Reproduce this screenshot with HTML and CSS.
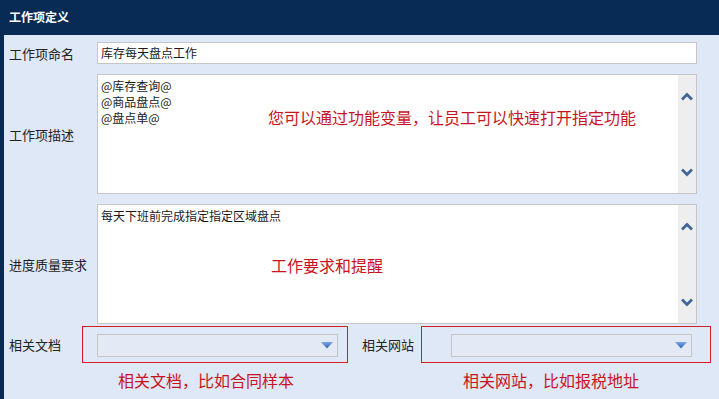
FILE: index.html
```html
<!DOCTYPE html>
<html lang="zh-CN">
<head>
  <meta charset="UTF-8" />
  <title>工作项定义</title>
  <link rel="stylesheet" href="styles.css">
</head>
<body>
  <div class="title-bar">工作项定义</div>
  <div class="panel">
    <div class="form">
      <label class="label">工作项命名</label>
      <div class="input">库存每天盘点工作</div>

      <label class="label">工作项描述</label>
      <div class="textarea">
        <div class="text">@库存查询@<br>@商品盘点@<br>@盘点单@</div>
        <div class="scroll">
          <svg width="12" height="9" viewBox="0 0 12 9"><polyline points="1,7.5 6,2.5 11,7.5" fill="none" stroke="#3f6898" stroke-width="2.8"/></svg>
          <svg width="12" height="9" viewBox="0 0 12 9"><polyline points="1,1.5 6,6.5 11,1.5" fill="none" stroke="#3f6898" stroke-width="2.8"/></svg>
        </div>
        <span class="tip tip-desc">您可以通过功能变量，让员工可以快速打开指定功能</span>
      </div>

      <label class="label">进度质量要求</label>
      <div class="textarea">
        <div class="text">每天下班前完成指定指定区域盘点</div>
        <div class="scroll">
          <svg width="12" height="9" viewBox="0 0 12 9"><polyline points="1,7.5 6,2.5 11,7.5" fill="none" stroke="#3f6898" stroke-width="2.8"/></svg>
          <svg width="12" height="9" viewBox="0 0 12 9"><polyline points="1,1.5 6,6.5 11,1.5" fill="none" stroke="#3f6898" stroke-width="2.8"/></svg>
        </div>
        <span class="tip tip-req">工作要求和提醒</span>
      </div>
    </div>

    <div class="links">
      <label class="label doc-label">相关文档</label>
      <div class="mark doc-mark">
        <div class="select">
          <svg width="12" height="7" viewBox="0 0 12 7"><defs><linearGradient id="g1" x1="0" y1="0" x2="0" y2="1"><stop offset="0" stop-color="#7aa6e6"/><stop offset="1" stop-color="#2f5fb0"/></linearGradient></defs><polygon points="0,0 12,0 6,6.5" fill="url(#g1)"/></svg>
        </div>
      </div>
      <label class="label site-label">相关网站</label>
      <div class="mark site-mark">
        <div class="select">
          <svg width="12" height="7" viewBox="0 0 12 7"><defs><linearGradient id="g2" x1="0" y1="0" x2="0" y2="1"><stop offset="0" stop-color="#7aa6e6"/><stop offset="1" stop-color="#2f5fb0"/></linearGradient></defs><polygon points="0,0 12,0 6,6.5" fill="url(#g2)"/></svg>
        </div>
      </div>
    </div>

    <div class="notes">
      <span class="note">相关文档，比如合同样本</span>
      <span class="note">相关网站，比如报税地址</span>
    </div>
  </div>
</body>
</html>
```

FILE: styles.css
```css
body {
  margin: 0;
  background: #dfe8f6;
  font-family: "Noto Sans CJK SC", "Noto Sans", sans-serif;
  color: #1a1a1a;
}
.title-bar {
  height: 35px;
  line-height: 34px;
  padding-left: 9px;
  background: #072b55;
  color: #fff;
  font-size: 12px;
  font-weight: bold;
}
.panel {
  border-left: 4px solid #072b55;
  height: 364px;
  box-sizing: border-box;
  padding: 7px 22px 0 5px;
}
.form {
  display: grid;
  grid-template-columns: 88px 1fr;
  row-gap: 10px;
  align-items: center;
}
.label {
  font-size: 13px;
  color: #222;
  white-space: nowrap;
}
.input {
  height: 22px;
  box-sizing: border-box;
  border: 1px solid #c6c6c6;
  background: #fff;
  font-size: 12px;
  line-height: 20px;
  padding-left: 3px;
}
.textarea {
  position: relative;
  display: flex;
  height: 120px;
  box-sizing: border-box;
  border: 1px solid #c6c6c6;
  background: #fff;
}
.text {
  flex: 1;
  font-size: 12px;
  line-height: 16px;
  padding: 3px 3px;
}
.scroll {
  width: 18px;
  background: #eeeeee;
  display: flex;
  flex-direction: column;
  justify-content: space-between;
  align-items: center;
  padding: 17px 0 16px;
}
.scroll svg {
  display: block;
}
.tip {
  position: absolute;
  font-size: 16px;
  line-height: 22px;
  color: #c8141c;
  white-space: nowrap;
}
.tip-desc {
  left: 170px;
  top: 31px;
}
.tip-req {
  left: 173px;
  top: 49px;
}
.links {
  display: flex;
  align-items: center;
  margin-top: 2px;
}
.links > * {
  flex-shrink: 0;
}
.doc-label {
  width: 73px;
}
.site-label {
  width: 59px;
  margin-left: 14px;
}
.mark {
  border: 1px solid #d42020;
  padding: 7px 0 5px;
  box-sizing: border-box;
}
.doc-mark {
  width: 266px;
  padding-left: 14px;
}
.site-mark {
  width: 290px;
  padding-left: 29px;
}
.select {
  width: 241px;
  height: 23px;
  box-sizing: border-box;
  border: 1px solid #c6c6c6;
  background: #e3eaf6;
  display: flex;
  justify-content: flex-end;
  align-items: center;
  padding-right: 4px;
}
.notes {
  display: flex;
  margin-top: 6px;
}
.note {
  width: 345px;
  flex-shrink: 0;
  box-sizing: border-box;
  padding-left: 109px;
  font-size: 16px;
  line-height: 22px;
  color: #c8141c;
  white-space: nowrap;
}
```
